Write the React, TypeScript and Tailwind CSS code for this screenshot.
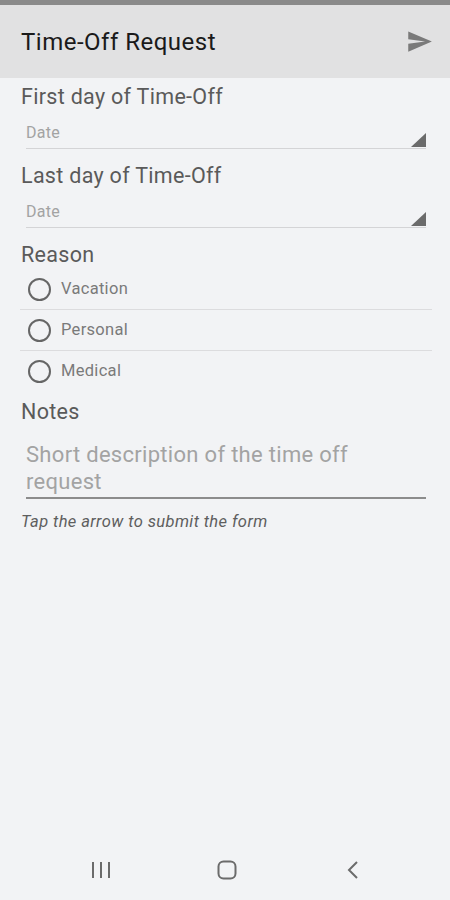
import React from 'react'

const REASONS = ['Vacation', 'Personal', 'Medical']

function DateField() {
  return (
    <div className="relative ml-[26px] mr-[24px] flex h-[39px] items-end border-b border-[#d4d4d6] pb-[5px]">
      <span className="text-[16px] leading-[20px] tracking-[0.3px] text-[#a3a3a3]">Date</span>
      <svg className="absolute bottom-[1px] right-0" width="15" height="14" viewBox="0 0 15 14">
        <polygon points="15,0 15,14 0,14" fill="#6b6b6b" />
      </svg>
    </div>
  )
}

export default function App() {
  return (
    <div className="flex h-[900px] w-[450px] flex-col bg-[#f2f3f5] font-['Roboto',sans-serif]">
      <div className="h-[5px] bg-[#8a8a8a]" />
      <header className="flex h-[73px] items-center justify-between bg-[#e1e1e2] pl-[21px] pr-[17px]">
        <h1 className="text-[24px] font-normal tracking-[0.5px] text-[#1a1a1a]">Time-Off Request</h1>
        <svg width="27" height="27" viewBox="0 0 24 24">
          <path d="M2.01 21L23 12 2.01 3 2 10l15 2-15 2z" fill="#7a7a7a" />
        </svg>
      </header>

      <main className="flex flex-1 flex-col">
        <p className="ml-[21px] mt-[6px] text-[21.5px] leading-[26px] tracking-[0.3px] text-[#5a5a5a]">First day of Time-Off</p>
        <DateField />
        <p className="ml-[21px] mt-[14px] text-[21.5px] leading-[26px] tracking-[0.3px] text-[#5a5a5a]">Last day of Time-Off</p>
        <DateField />

        <p className="ml-[21px] mt-[14px] text-[21.5px] leading-[26px] tracking-[0.3px] text-[#5a5a5a]">Reason</p>
        <div className="ml-[20px] mr-[18px] mt-[1px]">
          {REASONS.map((r, i) => (
            <div
              key={r}
              className={`flex h-[41px] items-center pl-[8px] ${i < REASONS.length - 1 ? 'border-b border-[#dcdcde]' : ''}`}
            >
              <span className="h-[23px] w-[23px] rounded-full border-2 border-[#666666]" />
              <span className="ml-[10px] text-[16.5px] tracking-[0.3px] text-[#7a7a7a]">{r}</span>
            </div>
          ))}
        </div>

        <p className="ml-[21px] mt-[7px] text-[21.5px] leading-[26px] tracking-[0.3px] text-[#5a5a5a]">Notes</p>
        <div className="ml-[26px] mr-[24px] mt-[16px] border-b-2 border-[#8c8c8c] pb-[2px]">
          <p className="text-[22px] leading-[27px] tracking-[0.3px] text-[#a3a3a3]">
            Short description of the time off
            <br />
            request
          </p>
        </div>
        <p className="ml-[21px] mt-[11px] text-[16.5px] italic tracking-[0.4px] text-[#5e5e5e]">Tap the arrow to submit the form</p>
      </main>

      <nav className="flex h-[60px] items-center justify-center gap-[106px] pl-[4px]">
        <svg width="20" height="18" viewBox="0 0 20 18">
          <path d="M2 1v16M10 1v16M18 1v16" stroke="#6b6b6b" strokeWidth="2" />
        </svg>
        <svg width="20" height="20" viewBox="0 0 20 20">
          <rect x="1.5" y="1.5" width="17" height="17" rx="5" fill="none" stroke="#6b6b6b" strokeWidth="2" />
        </svg>
        <svg width="20" height="18" viewBox="0 0 20 18">
          <path d="M14 1L6 9l8 8" fill="none" stroke="#6b6b6b" strokeWidth="2" />
        </svg>
      </nav>
    </div>
  )
}
